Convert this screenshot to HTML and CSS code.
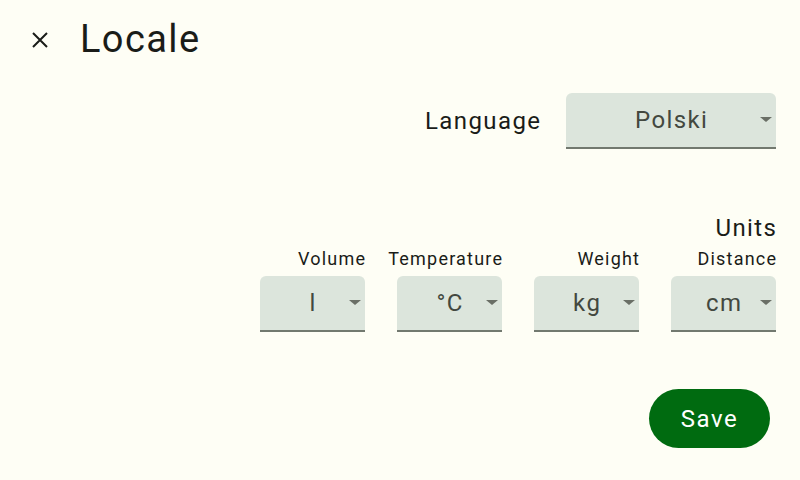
FILE: index.html
```html
<!DOCTYPE html>
<html lang="en">
<head>
    <meta charset="UTF-8">
    <meta name="viewport" content="width=device-width, initial-scale=1.0">
    <title>Locale</title>
    <link rel="stylesheet" href="styles.css">
</head>
<body>
    <header class="top-bar">
        <button class="close-btn" aria-label="Close">
            <svg width="24" height="24" viewBox="0 0 24 24">
                <path d="M5 5 L19 19 M19 5 L5 19" stroke="#1a1c18" stroke-width="2" fill="none"/>
            </svg>
        </button>
        <h1 class="title">Locale</h1>
    </header>

    <main class="content">
        <div class="language-row">
            <span class="field-label">Language</span>
            <div class="select select-wide">
                <span class="select-value">Polski</span>
                <span class="arrow"></span>
            </div>
        </div>

        <h2 class="section-title">Units</h2>
        <div class="units-row">
            <div class="unit">
                <span class="unit-label">Volume</span>
                <div class="select">
                    <span class="select-value">l</span>
                    <span class="arrow"></span>
                </div>
            </div>
            <div class="unit">
                <span class="unit-label">Temperature</span>
                <div class="select">
                    <span class="select-value">°C</span>
                    <span class="arrow"></span>
                </div>
            </div>
            <div class="unit">
                <span class="unit-label">Weight</span>
                <div class="select">
                    <span class="select-value">kg</span>
                    <span class="arrow"></span>
                </div>
            </div>
            <div class="unit">
                <span class="unit-label">Distance</span>
                <div class="select">
                    <span class="select-value">cm</span>
                    <span class="arrow"></span>
                </div>
            </div>
        </div>

        <div class="actions">
            <button class="save-btn">Save</button>
        </div>
    </main>
</body>
</html>
```

FILE: styles.css
```css
* {
    margin: 0;
    padding: 0;
    box-sizing: border-box;
    font-family: 'Roboto', 'Liberation Sans', sans-serif;
}

body {
    background-color: #fefef5;
    color: #1a1c18;
    width: 800px;
    height: 480px;
    overflow: hidden;
}

.top-bar {
    display: flex;
    align-items: center;
    height: 80px;
    padding-left: 28px;
}

.close-btn {
    width: 24px;
    height: 24px;
    background: transparent;
    border: none;
    display: flex;
    align-items: center;
    justify-content: center;
    cursor: pointer;
}

.title {
    font-size: 38px;
    font-weight: 400;
    margin-left: 28px;
    margin-bottom: 2px;
    letter-spacing: 1.4px;
}

.content {
    display: flex;
    flex-direction: column;
    align-items: flex-end;
    padding-right: 24px;
}

.language-row {
    display: flex;
    align-items: center;
    gap: 26px;
    margin-top: 13px;
}

.field-label {
    font-size: 24px;
    letter-spacing: 1.4px;
    margin-right: -1.4px;
}

.select {
    position: relative;
    width: 105px;
    height: 56px;
    background-color: #dce5dc;
    border-radius: 6px 6px 0 0;
    border-bottom: 2px solid #72796f;
    display: flex;
    align-items: center;
    justify-content: center;
}

.select-wide {
    width: 210px;
}

.select-value {
    font-size: 24px;
    color: #43483f;
    letter-spacing: 1.4px;
    margin-right: -1.4px;
}

.arrow {
    position: absolute;
    right: 4px;
    top: 24px;
    width: 0;
    height: 0;
    border-left: 6px solid transparent;
    border-right: 6px solid transparent;
    border-top: 5px solid #6a6f66;
}

.section-title {
    font-size: 24px;
    font-weight: 400;
    margin-top: 65px;
    letter-spacing: 1.4px;
    margin-right: -1.4px;
}

.units-row {
    display: flex;
    gap: 32px;
    margin-top: 6px;
}

.unit {
    width: 105px;
    display: flex;
    flex-direction: column;
    align-items: flex-end;
    gap: 6px;
}

.unit-label {
    font-size: 18px;
    letter-spacing: 1.2px;
    margin-right: -1.2px;
    height: 22px;
    white-space: nowrap;
}

.actions {
    margin-top: 57px;
    margin-right: 6px;
}

.save-btn {
    width: 121px;
    height: 59px;
    border: none;
    border-radius: 30px;
    background-color: #006b10;
    color: #ffffff;
    font-size: 24px;
    letter-spacing: 1.6px;
    cursor: pointer;
}
```
